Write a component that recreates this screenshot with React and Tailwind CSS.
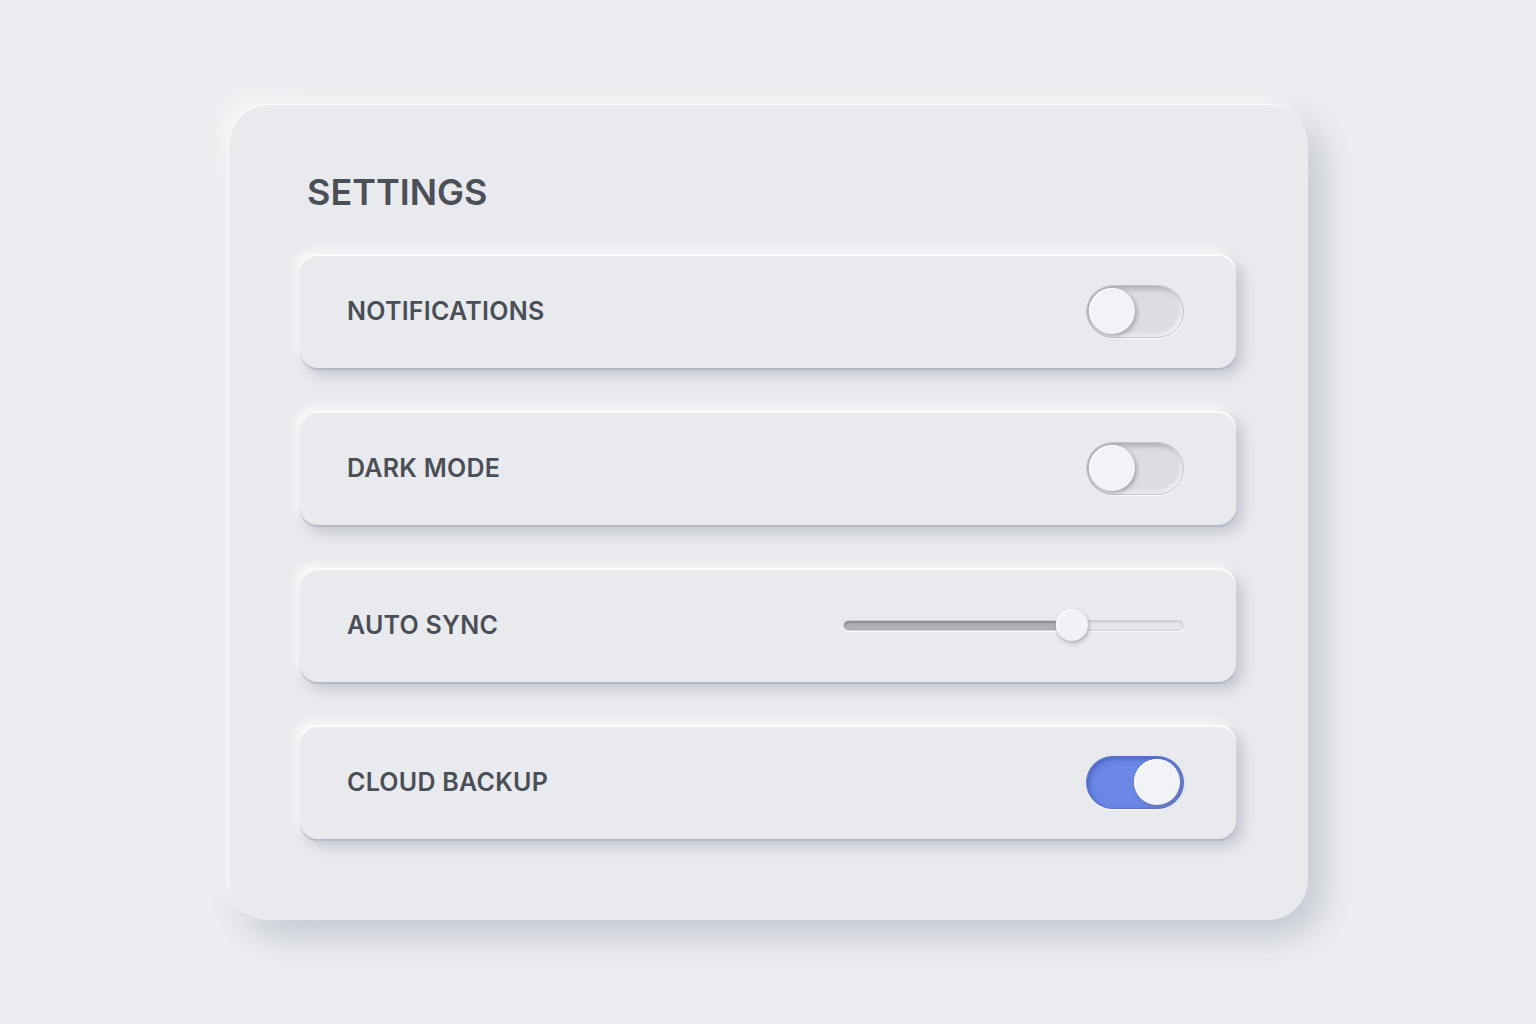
const rows = [
  { label: 'NOTIFICATIONS', kind: 'toggle', on: false },
  { label: 'DARK MODE', kind: 'toggle', on: false },
  { label: 'AUTO SYNC', kind: 'slider', value: 0.63 },
  { label: 'CLOUD BACKUP', kind: 'toggle', on: true },
];

function Toggle({ on }) {
  return (
    <div
      className={
        on
          ? 'flex h-[53px] w-[98px] items-center justify-end rounded-full border border-[#5a73cf] bg-[#6b87e6] p-[3px] shadow-[inset_2px_2px_5px_rgba(40,60,140,0.45),0_1px_1px_rgba(255,255,255,0.9)]'
          : 'flex h-[53px] w-[98px] items-center rounded-full border border-[#c3c5cb] bg-[#dcdde2] p-[2px] shadow-[inset_3px_3px_5px_rgba(120,124,135,0.5),inset_-2px_-2px_4px_rgba(255,255,255,0.7),0_1px_1px_rgba(255,255,255,0.9)]'
      }
    >
      <div className="h-[46px] w-[46px] rounded-full bg-[#f2f3f6] shadow-[2px_2px_4px_rgba(90,95,110,0.45),inset_1px_1px_1px_rgba(255,255,255,0.9)]" />
    </div>
  );
}

function Slider({ value }) {
  const width = 341;
  return (
    <div className="relative flex h-[34px] w-[341px] items-center">
      <div className="h-[11px] w-full overflow-hidden rounded-full border border-[#d0d2d7] bg-[#e6e7eb] shadow-[inset_1px_1px_2px_rgba(120,124,135,0.35),0_1px_1px_rgba(255,255,255,0.9)]">
        <div
          className="h-full rounded-full bg-[#afb1b7] shadow-[inset_1px_2px_2px_rgba(90,95,105,0.45)]"
          style={{ width: `${value * width}px` }}
        />
      </div>
      <div
        className="absolute top-[1px] h-[32px] w-[32px] rounded-full bg-[#f1f2f5] shadow-[1px_2px_4px_rgba(90,95,110,0.45),inset_1px_1px_1px_rgba(255,255,255,0.9)]"
        style={{ left: `${value * width - 2}px` }}
      />
    </div>
  );
}

export default function App() {
  return (
    <div className="flex h-screen w-full items-center justify-center bg-[#eceef1] font-['Inter',sans-serif]">
      <div className="flex h-[816px] w-[1080px] flex-col rounded-[40px] bg-[#e9eaee] px-[72px] pt-[56px] shadow-[14px_16px_36px_rgba(160,165,180,0.55),-6px_-6px_18px_rgba(255,255,255,0.9),inset_1px_1px_1px_rgba(255,255,255,0.9)]">
        <div className="flex h-[64px] items-center pl-[7px] text-[36px] font-semibold text-[#4b4f57]">
          SETTINGS
        </div>
        <div className="mt-[30px] flex flex-col gap-[43px]">
          {rows.map((row) => (
            <div
              key={row.label}
              className="flex h-[114px] items-center justify-between rounded-[18px] bg-[#e9eaee] pl-[47px] pr-[52px] shadow-[6px_7px_14px_rgba(160,165,180,0.55),0_2px_1px_rgba(170,174,186,0.6),-4px_-4px_10px_rgba(255,255,255,0.9),inset_0_2px_1px_rgba(255,255,255,0.9)]"
            >
              <span className="pt-[2px] text-[25px] font-semibold tracking-[0.01em] text-[#4a4e56]">
                {row.label}
              </span>
              {row.kind === 'toggle' ? <Toggle on={row.on} /> : <Slider value={row.value} />}
            </div>
          ))}
        </div>
      </div>
    </div>
  );
}
